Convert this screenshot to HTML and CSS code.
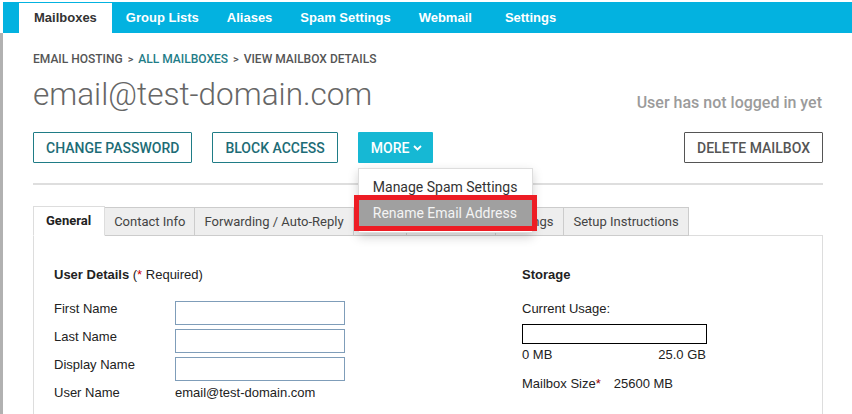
FILE: index.html
```html
<!DOCTYPE html>
<html lang="en">
<head>
    <meta charset="UTF-8">
    <meta name="viewport" content="width=device-width, initial-scale=1.0">
    <title>View Mailbox Details</title>
    <link rel="stylesheet" href="styles.css">
</head>
<body>
    <!-- Top navigation -->
    <div class="topnav">
        <a class="nav-item active" href="#">Mailboxes</a>
        <a class="nav-item" href="#">Group Lists</a>
        <a class="nav-item" href="#">Aliases</a>
        <a class="nav-item" href="#">Spam Settings</a>
        <a class="nav-item nav-webmail" href="#">Webmail</a>
        <a class="nav-item" href="#">Settings</a>
    </div>

    <div class="main">
        <div class="breadcrumb">
            <span>Email Hosting</span>
            <span class="sep">&gt;</span>
            <a href="#">All Mailboxes</a>
            <span class="sep">&gt;</span>
            <span>View Mailbox Details</span>
        </div>

        <div class="title-row">
            <h1 class="mailbox-title">email@test-domain.com</h1>
            <div class="login-status">User has not logged in yet</div>
        </div>

        <div class="actions">
            <button class="btn btn-outline">Change Password</button>
            <button class="btn btn-outline">Block Access</button>
            <div class="more-wrap">
                <button class="btn btn-more">More
                    <svg class="chevron" width="9" height="6" viewBox="0 0 9 6"><path d="M1 1l3.5 3.5L8 1" fill="none" stroke="#fff" stroke-width="1.8"/></svg>
                </button>
                <!-- dropdown is open in this state -->
                <div class="dropdown">
                    <div class="dropdown-item">Manage Spam Settings</div>
                    <div class="dropdown-item selected">Rename Email Address</div>
                </div>
            </div>
            <button class="btn btn-delete">Delete Mailbox</button>
        </div>

        <div class="divider"></div>

        <div class="tabs">
            <div class="tab active">General</div>
            <div class="tab">Contact Info</div>
            <div class="tab">Forwarding / Auto-Reply</div>
            <div class="tab tab-alias">Alias</div>
            <div class="tab tab-filter">Spam Filter</div>
            <div class="tab tab-settings">Settings</div>
            <div class="tab">Setup Instructions</div>
        </div>

        <div class="panel">
            <div class="col-left">
                <div class="section-title"><b>User Details</b> (<span class="req">*</span> Required)</div>
                <div class="form-row">
                    <label>First Name</label>
                    <input type="text">
                </div>
                <div class="form-row">
                    <label>Last Name</label>
                    <input type="text">
                </div>
                <div class="form-row">
                    <label>Display Name</label>
                    <input type="text">
                </div>
                <div class="form-row">
                    <label>User Name</label>
                    <span class="value">email@test-domain.com</span>
                </div>
            </div>
            <div class="col-right">
                <div class="section-title"><b>Storage</b></div>
                <div class="usage-label">Current Usage:</div>
                <div class="usage-bar"></div>
                <div class="usage-scale">
                    <span>0 MB</span>
                    <span>25.0 GB</span>
                </div>
                <div class="mailbox-size">Mailbox Size<span class="req dark">*</span><span class="size-value">25600 MB</span></div>
            </div>
        </div>
    </div>
</body>
</html>
```

FILE: styles.css
```css
body {
    margin: 0;
    padding: 0;
    font-family: "Liberation Sans", Arial, sans-serif;
    font-size: 13px;
    color: #222;
    background-color: #fff;
}

/* top navigation */
.topnav {
    display: flex;
    margin: 2px 0 0 3px;
    padding-left: 16px;
    height: 31px;
    background-color: #03b2e0;
}
.nav-item {
    display: block;
    padding: 0 14px;
    margin-top: 1px;
    line-height: 30px;
    font-size: 13px;
    font-weight: bold;
    color: #fff;
    text-decoration: none;
}
.nav-item.active {
    background-color: #fff;
    color: #333;
    padding: 0 15px;
}
.nav-webmail {
    padding-right: 19px;
}

.main {
    border-left: 3px solid #b1b1b1;
    padding: 18px 29px 0 30px;
    min-height: 380px;
}

.breadcrumb {
    font-family: Roboto, sans-serif;
    font-size: 12px;
    font-weight: 500;
    text-transform: uppercase;
    color: #555;
    line-height: 16px;
}
.breadcrumb a {
    color: #1f7d88;
    text-decoration: none;
}
.breadcrumb .sep {
    margin: 0 2px;
    font-size: 11px;
}

.title-row {
    display: flex;
    align-items: flex-end;
    justify-content: space-between;
    margin-top: 7px;
}
.mailbox-title {
    margin: 0;
    font-family: "Roboto Light", Roboto, sans-serif;
    font-weight: 300;
    font-size: 31.5px;
    line-height: 40px;
    color: #666;
}
.login-status {
    font-family: Roboto, sans-serif;
    font-weight: 500;
    font-size: 16px;
    color: #9b9b9b;
    margin-bottom: 3px;
    margin-right: 1px;
}

/* action buttons */
.actions {
    display: flex;
    align-items: center;
    margin-top: 17px;
}
.btn {
    height: 31px;
    padding: 0 12px;
    font-family: Roboto, sans-serif;
    font-size: 14px;
    font-weight: 500;
    text-transform: uppercase;
    background-color: #fff;
    border-radius: 1px;
    cursor: pointer;
}
.btn-outline {
    border: 1px solid #1f7c86;
    color: #1d6c76;
    margin-right: 20px;
}
.btn-more {
    border: none;
    background-color: #16b8d4;
    color: #fff;
    padding: 0 11px 0 13px;
}
.chevron {
    margin-left: 0;
    vertical-align: 2px;
}
.btn-delete {
    margin-left: auto;
    border: 1px solid #555;
    color: #555;
}

.more-wrap {
    position: relative;
}
.dropdown {
    position: absolute;
    top: 36px;
    left: 0;
    width: 173px;
    padding: 5px 0 6px;
    background-color: #fff;
    border: 1px solid #ddd;
    box-shadow: 0 4px 10px rgba(0, 0, 0, 0.18);
    z-index: 2;
}
.dropdown-item {
    padding-left: 14px;
    line-height: 26px;
    font-family: Roboto, sans-serif;
    font-size: 14px;
    color: #333;
    white-space: nowrap;
}
.dropdown-item.selected {
    background-color: #a0a0a0;
    color: #f4f4f4;
    outline: 5px solid #ed1c24;
}

.divider {
    margin-top: 20px;
    border-top: 2px solid #dedede;
}

/* tabs */
.tabs {
    display: flex;
    margin-top: 21px;
    margin-bottom: -1px;
    align-items: flex-end;
}
.tab {
    padding: 0 9px;
    line-height: 27px;
    font-family: Roboto, sans-serif;
    font-size: 13px;
    color: #444;
    background-color: #eee;
    border: 1px solid #ccc;
    border-left: none;
    white-space: nowrap;
}
.tab-alias {
    padding: 0 12px;
}
.tab-filter {
    padding: 0 11px;
}
.tab-settings {
    padding: 0 10px;
}
.tab.active {
    padding: 0 13px 0 12px;
    line-height: 28px;
    background-color: #fff;
    border-left: 1px solid #ddd;
    border-color: #ddd;
    border-bottom-color: #fff;
    font-weight: bold;
    color: #222;
}

.panel {
    display: grid;
    grid-template-columns: 468px 1fr;
    border: 1px solid #ddd;
    padding: 31px 20px 20px;
}

.section-title {
    line-height: 16px;
    margin-bottom: 16px;
}
.req {
    color: #c00;
}
.req.dark {
    color: #900;
}

.form-row {
    display: flex;
    height: 28px;
}
.form-row label {
    width: 121px;
    line-height: 20px;
}
.form-row input {
    box-sizing: border-box;
    width: 170px;
    height: 24px;
    margin: 2px 0;
    border: 1px solid #7f9db9;
    padding: 2px 4px;
}
.form-row .value {
    line-height: 20px;
}

.usage-label {
    line-height: 20px;
}
.usage-bar {
    box-sizing: border-box;
    margin-top: 5px;
    width: 185px;
    height: 20px;
    border: 1px solid #000;
}
.usage-scale {
    display: flex;
    justify-content: space-between;
    width: 184px;
    margin-top: 2px;
    line-height: 18px;
}
.mailbox-size {
    margin-top: 10px;
    line-height: 20px;
}
.size-value {
    margin-left: 13px;
}
```
